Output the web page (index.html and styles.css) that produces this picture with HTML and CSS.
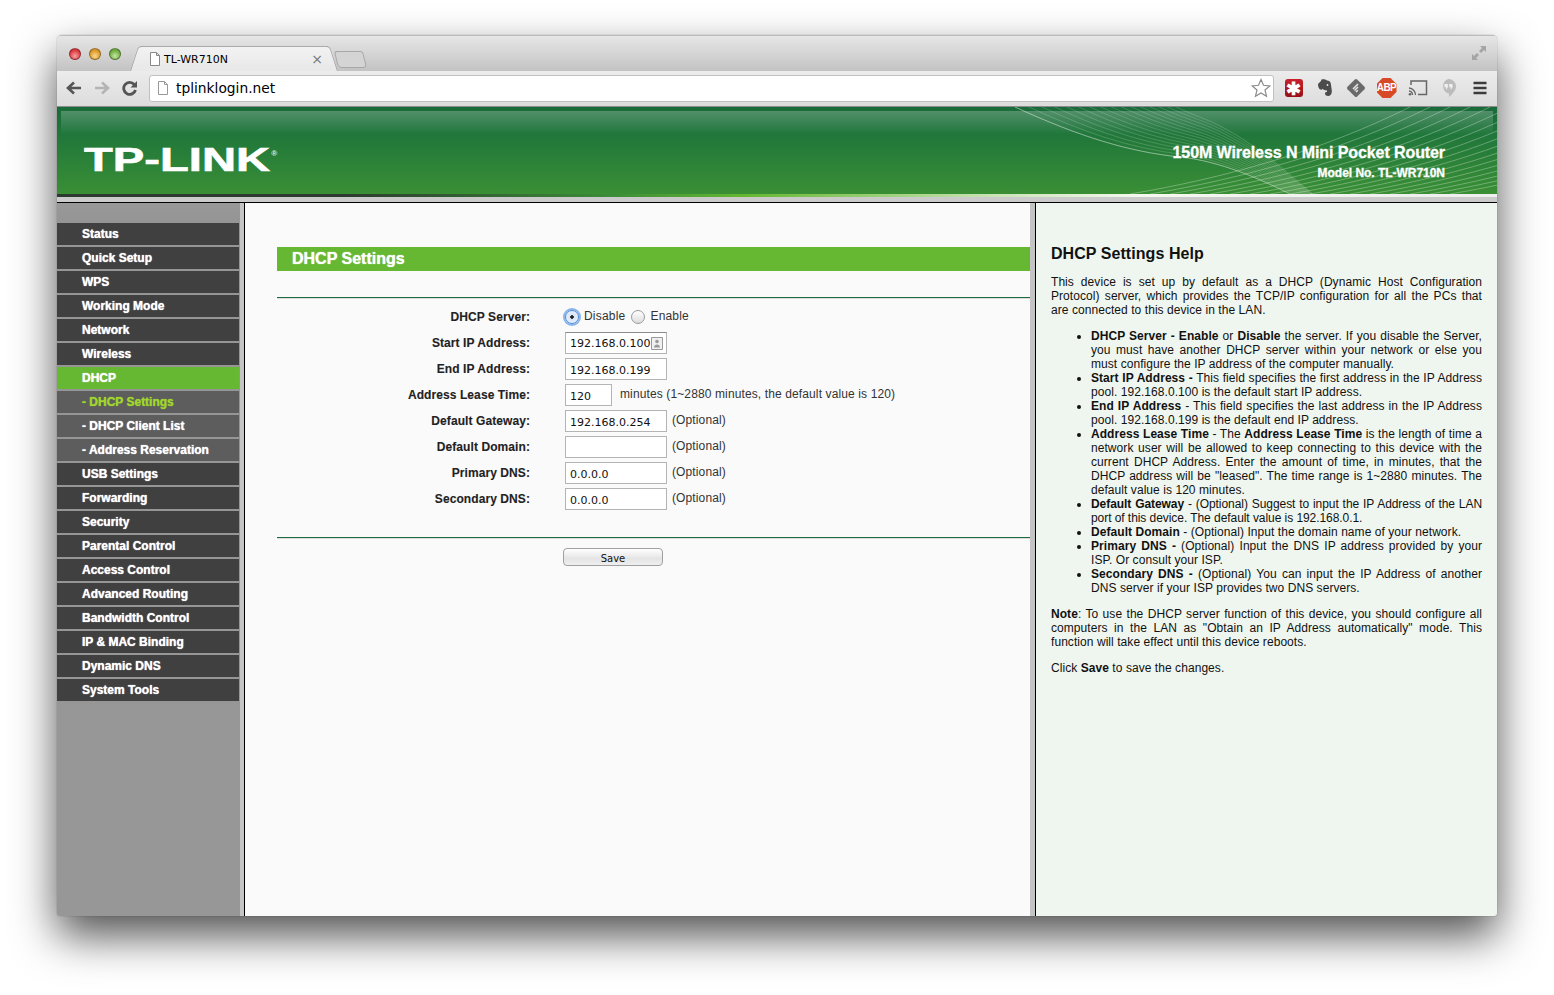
FILE: index.html
```html
<!DOCTYPE html>
<html lang="en">
<head>
    <meta charset="UTF-8">
    <title>TL-WR710N</title>
    <link rel="stylesheet" href="styles.css">
</head>
<body>
<div class="window">
    <div class="tabbar">
        <div class="lights">
            <span class="light red"></span>
            <span class="light yellow"></span>
            <span class="light green"></span>
        </div>
        <div class="tab">
            <svg class="page-icon" width="12" height="14" viewBox="0 0 12 14"><path d="M1.500.5h6l3 3v10h-9z M7.500.5v3h3" fill="#fff" stroke="#888"/></svg>
            <span class="tab-title">TL-WR710N</span>
            <span class="tab-close">×</span>
        </div>
        <div class="newtab"></div>
        <svg class="fullscreen" width="16" height="16" viewBox="0 0 16 16"><path d="M9 1h6v6l-2-2-3 3-2-2 3-3z M1 9v6h6l-2-2 3-3-2-2-3 3z" fill="#a5a5a5"/></svg>
    </div>
    <div class="toolbar">
        <svg class="nav" width="18" height="16" viewBox="0 0 18 16"><path d="M16 8H4 M9 2.500 3 8l6 5.500" fill="none" stroke="#555" stroke-width="2.600"/></svg>
        <svg class="nav" width="18" height="16" viewBox="0 0 18 16"><path d="M2 8h12 M9 2.500 15 8l-6 5.500" fill="none" stroke="#b4b4b4" stroke-width="2.600"/></svg>
        <svg class="nav" width="18" height="16" viewBox="0 0 18 16"><path d="M14.500 10a6 6 0 1 1-1.200-5.500" fill="none" stroke="#555" stroke-width="2.800"/><path d="M16 1v6.500H9.500z" fill="#555"/></svg>
        <div class="omnibox">
            <svg class="page-icon" width="12" height="14" viewBox="0 0 12 14"><path d="M1.500.5h6l3 3v10h-9z M7.500.5v3h3" fill="#fff" stroke="#999"/></svg>
            <span class="url">tplinklogin.net</span>
            <svg class="star" width="20" height="20" viewBox="0 0 20 20"><path d="M10 1.500l2.500 5.800 6.300.6-4.800 4.100 1.500 6.200L10 14.900l-5.500 3.300L6 12 1.200 7.900l6.300-.6z" fill="#fff" stroke="#8a8a8a" stroke-width="1.200"/></svg>
        </div>
        <div class="extensions">
            <span class="ext lastpass">✱</span>
            <svg width="16" height="18" viewBox="0 0 16 18"><path d="M1 5l3-3 .5-1.500C6 0 9 .5 10 1.500c2 0 3.500 1 3.800 3l1 7c.2 3-1 5.500-3.800 5.500-2 0-3-1-3-2.500 0-1 1-1.800 2-1.300l-.2-2c-2 0-3.500-.3-4-1.500-.8 1-1.500 1.300-3 .5C1.500 9.500 1 7 1 5z" fill="#4c4c4c"/><circle cx="10.500" cy="6" r=".9" fill="#e6e6e6"/></svg>
            <svg width="20" height="20" viewBox="0 0 20 20"><path d="M8.800 1.500a1.700 1.700 0 0 1 2.400 0l7.300 7.300a1.700 1.700 0 0 1 0 2.400l-7.300 7.300a1.700 1.700 0 0 1-2.400 0l-7.300-7.300a1.700 1.700 0 0 1 0-2.400z" fill="#6a6a6a"/><path d="M7 11l5-5 M8.500 12.500l3.500-3.500 M10 14l1.800-1.800" stroke="#e8e8e8" stroke-width="1.500"/></svg>
            <span class="ext abp">ABP</span>
            <svg width="20" height="18" viewBox="0 0 20 18"><path d="M3 6V2h15.500v13.500H10" fill="none" stroke="#666" stroke-width="1.500"/><path d="M1 9a7 7 0 0 1 6.500 7 M1 12a4 4 0 0 1 3.500 4" fill="none" stroke="#666" stroke-width="1.300"/><circle cx="2" cy="15.300" r="1.300" fill="#666"/></svg>
            <svg width="17" height="20" viewBox="0 0 17 20"><path d="M8.500 1a7.500 7.500 0 0 1 7.500 7.500c0 3.500-3 7-7 10.500v-3.500A7.500 7.500 0 0 1 8.500 1z" fill="#bcbcbc"/><path d="M4.500 6h3.300v3.300L6 12V9.300H4.500z M9.200 6h3.300v3.300L10.700 12V9.300H9.200z" fill="#f0f0f0"/></svg>
            <svg width="14" height="14" viewBox="0 0 14 14"><path d="M.5 2h13 M.5 7h13 M.5 12h13" stroke="#3c3c3c" stroke-width="2.500"/></svg>
        </div>
    </div>

    <div class="banner">
        <div class="gloss"></div>
        <svg class="waves" width="500" height="87" viewBox="997 0 500 87" fill="none" stroke="#fff">
            <defs>
                <path id="fan" d="M1015 0C1080 30 1130 45 1180 50 1220 54 1260 72 1290 87 1310 96 1325 104 1340 112"/>
                <path id="rise" d="M1230 87C1320 72 1420 45 1510 0"/>
            </defs>
            <g stroke-opacity=".17">
                <use href="#fan"/>
                <use href="#fan" transform="rotate(1 1340 112)"/>
                <use href="#fan" transform="rotate(2 1340 112)"/>
                <use href="#fan" transform="rotate(3 1340 112)"/>
                <use href="#fan" transform="rotate(4 1340 112)"/>
                <use href="#fan" transform="rotate(5 1340 112)"/>
                <use href="#fan" transform="rotate(6 1340 112)"/>
                <use href="#fan" transform="rotate(7 1340 112)"/>
                <use href="#fan" transform="rotate(8 1340 112)"/>
                <use href="#fan" transform="rotate(9 1340 112)"/>
                <use href="#fan" transform="rotate(10 1340 112)"/>
                <use href="#fan" transform="rotate(11 1340 112)"/>
                <use href="#fan" transform="rotate(12 1340 112)"/>
                <use href="#fan" transform="rotate(13 1340 112)"/>
                <use href="#fan" transform="rotate(14 1340 112)"/>
                <use href="#fan" transform="rotate(15 1340 112)"/>
            </g>
            <use href="#fan" stroke-opacity=".35"/>
            <g stroke-opacity=".3">
                <use href="#rise" transform="translate(-20 0)"/>
                <use href="#rise" transform="translate(-40 0)"/>
                <use href="#rise" transform="translate(-60 0)"/>
                <use href="#rise" transform="translate(-80 0)"/>
                <use href="#rise" transform="translate(-100 0)"/>
                <use href="#rise"/>
                <use href="#rise" transform="translate(20 0)"/>
                <use href="#rise" transform="translate(40 0)"/>
                <use href="#rise" transform="translate(60 0)"/>
                <use href="#rise" transform="translate(80 0)"/>
                <use href="#rise" transform="translate(100 0)"/>
                <use href="#rise" transform="translate(120 0)"/>
                <use href="#rise" transform="translate(140 0)"/>
                <use href="#rise" transform="translate(160 0)"/>
                <use href="#rise" transform="translate(180 0)"/>
                <use href="#rise" transform="translate(200 0)"/>
                <use href="#rise" transform="translate(220 0)"/>
            </g>
        </svg>
        <div class="logo"><span class="logo-text">TP-LINK</span><span class="logo-reg">®</span></div>
        <div class="product">
            <div class="product-name">150M Wireless N Mini Pocket Router</div>
            <div class="product-model">Model No. TL-WR710N</div>
        </div>
    </div>
    <div class="banner-foot"></div>

    <div class="columns">
        <nav class="sidebar">
            <a class="menu-item">Status</a>
            <a class="menu-item">Quick Setup</a>
            <a class="menu-item">WPS</a>
            <a class="menu-item">Working Mode</a>
            <a class="menu-item">Network</a>
            <a class="menu-item">Wireless</a>
            <a class="menu-item active">DHCP</a>
            <a class="menu-item sub current">- DHCP Settings</a>
            <a class="menu-item sub">- DHCP Client List</a>
            <a class="menu-item sub">- Address Reservation</a>
            <a class="menu-item">USB Settings</a>
            <a class="menu-item">Forwarding</a>
            <a class="menu-item">Security</a>
            <a class="menu-item">Parental Control</a>
            <a class="menu-item">Access Control</a>
            <a class="menu-item">Advanced Routing</a>
            <a class="menu-item">Bandwidth Control</a>
            <a class="menu-item">IP &amp; MAC Binding</a>
            <a class="menu-item">Dynamic DNS</a>
            <a class="menu-item">System Tools</a>
        </nav>

        <main class="content">
            <h1 class="section-title">DHCP Settings</h1>
            <hr class="rule first">
            <div class="form">
                <div class="label">DHCP Server:</div>
                <div class="field">
                    <span class="radio checked"></span><span class="radio-label">Disable</span>
                    <span class="radio"></span><span class="radio-label">Enable</span>
                </div>
                <div class="label">Start IP Address:</div>
                <div class="field"><span class="input with-key">192.168.0.100<svg class="key" width="12" height="13" viewBox="0 0 12 13"><path d="M.5.5h11v12H.5z" fill="#f0f0f0" stroke="#999"/><circle cx="6" cy="4.500" r="1.800" fill="#999"/><path d="M3 10.500c0-4 6-4 6 0z" fill="#999"/></svg></span></div>
                <div class="label">End IP Address:</div>
                <div class="field"><span class="input">192.168.0.199</span></div>
                <div class="label">Address Lease Time:</div>
                <div class="field"><span class="input short">120</span><span class="note wide">minutes (1~2880 minutes, the default value is 120)</span></div>
                <div class="label">Default Gateway:</div>
                <div class="field"><span class="input">192.168.0.254</span><span class="note">(Optional)</span></div>
                <div class="label">Default Domain:</div>
                <div class="field"><span class="input"></span><span class="note">(Optional)</span></div>
                <div class="label">Primary DNS:</div>
                <div class="field"><span class="input">0.0.0.0</span><span class="note">(Optional)</span></div>
                <div class="label">Secondary DNS:</div>
                <div class="field"><span class="input">0.0.0.0</span><span class="note">(Optional)</span></div>
            </div>
            <hr class="rule second">
            <div class="actions"><button class="save">Save</button></div>
        </main>

        <aside class="help">
            <h2>DHCP Settings Help</h2>
            <p>This device is set up by default as a DHCP (Dynamic Host Configuration Protocol) server, which provides the TCP/IP configuration for all the PCs that are connected to this device in the LAN.</p>
            <ul>
                <li><b>DHCP Server - Enable</b> or <b>Disable</b> the server. If you disable the Server, you must have another DHCP server within your network or else you must configure the IP address of the computer manually.</li>
                <li><b>Start IP Address -</b> This field specifies the first address in the IP Address pool. 192.168.0.100 is the default start IP address.</li>
                <li><b>End IP Address</b> - This field specifies the last address in the IP Address pool. 192.168.0.199 is the default end IP address.</li>
                <li><b>Address Lease Time</b> - The <b>Address Lease Time</b> is the length of time a network user will be allowed to keep connecting to this device with the current DHCP Address. Enter the amount of time, in minutes, that the DHCP address will be "leased". The time range is 1~2880 minutes. The default value is 120 minutes.</li>
                <li class="tight"><b>Default Gateway</b> - (Optional) Suggest to input the IP Address of the LAN port of this device. The default value is 192.168.0.1.</li>
                <li><b>Default Domain</b> - (Optional) Input the domain name of your network.</li>
                <li><b>Primary DNS -</b> (Optional) Input the DNS IP address provided by your ISP. Or consult your ISP.</li>
                <li><b>Secondary DNS -</b> (Optional) You can input the IP Address of another DNS server if your ISP provides two DNS servers.</li>
            </ul>
            <p><b>Note</b>: To use the DHCP server function of this device, you should configure all computers in the LAN as "Obtain an IP Address automatically" mode. This function will take effect until this device reboots.</p>
            <p>Click <b>Save</b> to save the changes.</p>
        </aside>
    </div>
</div>
</body>
</html>
```

FILE: styles.css
```css
html, body {
    margin: 0;
    height: 995px;
    overflow: hidden;
    background: #fff;
}
body {
    font-family: "Liberation Sans", Arial, sans-serif;
    font-size: 12px;
    color: #000;
    padding: 35px 57px 0;
    box-sizing: border-box;
}
.window {
    height: 881px;
    display: flex;
    flex-direction: column;
    border-radius: 5px 5px 3px 3px;
    overflow: hidden;
    box-shadow: 0 0 1px rgba(0,0,0,.6);
}
body::before {
    content: "";
    position: absolute;
    left: 57px;
    top: 35px;
    width: 1440px;
    height: 881px;
    border-radius: 5px;
    box-shadow: 0 20px 44px rgba(0,0,0,.68);
}
.window > * {
    position: relative;
}

/* browser chrome */
.tabbar {
    height: 36px;
    flex: none;
    display: flex;
    align-items: flex-end;
    background: linear-gradient(#e6e6e6, #c3c3c3);
    border-top: 1px solid #bbb;
    box-sizing: border-box;
}
.lights {
    display: flex;
    gap: 8px;
    align-self: flex-start;
    margin: 12px 0 0 12px;
}
.light {
    width: 12px;
    height: 12px;
    border-radius: 50%;
    box-sizing: border-box;
    border: 1px solid rgba(0,0,0,.35);
}
.red { background: radial-gradient(circle at 50% 70%, #f7a0a0, #d9333a 70%); }
.yellow { background: radial-gradient(circle at 50% 70%, #fbd98c, #d99322 70%); }
.green { background: radial-gradient(circle at 50% 70%, #c5e8a0, #6aa83c 70%); }
.tab {
    position: relative;
    width: 188px;
    height: 25px;
    margin-left: 19px;
    padding-left: 9px;
    box-sizing: border-box;
    display: flex;
    align-items: center;
    background: linear-gradient(#f2f2f2, #e8e8e8);
    border-top: 1px solid #aaa;
    font-family: "DejaVu Sans", sans-serif;
    font-size: 11px;
}
.tab::before,
.tab::after {
    content: "";
    position: absolute;
    top: -1px;
    bottom: 0;
    width: 12px;
    background: linear-gradient(#f2f2f2, #e8e8e8);
    border-top: 1px solid #aaa;
}
.tab::before {
    left: -6px;
    transform: skewX(-18deg);
    border-left: 1px solid #aaa;
    border-radius: 4px 0 0 0;
}
.tab::after {
    right: -6px;
    transform: skewX(18deg);
    border-right: 1px solid #aaa;
    border-radius: 0 4px 0 0;
}
.page-icon {
    position: relative;
    z-index: 1;
}
.tab-title {
    margin-left: 3px;
    flex: 1;
    position: relative;
    z-index: 1;
}
.tab-close {
    margin-right: 5px;
    font-size: 14px;
    color: #777;
    position: relative;
    z-index: 1;
}
.newtab {
    width: 27px;
    height: 15px;
    margin: 0 0 3px 8px;
    border: 1px solid #a8a8a8;
    border-radius: 3px 3px 4px 4px;
    background: #d4d4d4;
    transform: skewX(14deg);
}
.fullscreen {
    margin-left: auto;
    margin-right: 10px;
    align-self: flex-start;
    margin-top: 9px;
}
.toolbar {
    height: 36px;
    flex: none;
    display: flex;
    align-items: center;
    padding: 0 0 1px 8px;
    box-sizing: border-box;
    gap: 10px;
    background: linear-gradient(#ececec, #dcdcdc);
    border-bottom: 1px solid #8c8c8c;
}
.omnibox {
    width: 1125px;
    height: 27px;
    box-sizing: border-box;
    display: flex;
    align-items: center;
    padding: 0 2px 0 7px;
    background: #fff;
    border: 1px solid #c0c0c0;
    border-radius: 3px;
}
.url {
    flex: 1;
    margin-left: 7px;
    font-family: "DejaVu Sans", sans-serif;
    font-size: 13.800px;
}
.extensions {
    display: grid;
    grid-template-columns: repeat(7, 31px);
    justify-items: center;
    align-items: center;
    margin-left: -6px;
}
.ext {
    display: block;
    text-align: center;
    color: #fff;
    font-weight: bold;
}
.lastpass {
    width: 18px;
    height: 18px;
    background: linear-gradient(#c8202c, #961019);
    border-radius: 3px;
    font-size: 18px;
    line-height: 20px;
}
.abp {
    width: 20px;
    height: 20px;
    background: #d84a26;
    clip-path: polygon(30% 0, 70% 0, 100% 30%, 100% 70%, 70% 100%, 30% 100%, 0 70%, 0 30%);
    font-size: 10px;
    line-height: 20px;
    letter-spacing: -.6px;
}

/* router banner */
.banner {
    height: 87px;
    flex: none;
    overflow: hidden;
    display: flex;
    justify-content: space-between;
    background: linear-gradient(#1a6b3a, #1f763a 30%, #3a8f35);
}
.gloss {
    position: absolute;
    left: 4px;
    right: 4px;
    top: 4px;
    height: 24px;
    background: linear-gradient(rgba(255,255,255,.24), rgba(255,255,255,0));
}
.waves {
    position: absolute;
    right: 0;
    top: 0;
}
.logo {
    position: relative;
    margin: 41px 0 0 27px;
    color: #fff;
    font-weight: bold;
    line-height: 24px;
    display: flex;
}
.logo-text {
    font-size: 33px;
    transform: scaleX(1.43);
    transform-origin: left;
    -webkit-text-stroke: .6px #fff;
}
.logo-reg {
    font-size: 8px;
    line-height: 12px;
    margin-left: 57px;
    opacity: .9;
}
.product {
    position: relative;
    margin: 37px 52px 0 0;
    text-align: right;
    color: #fff;
    font-weight: bold;
    -webkit-text-stroke: .3px #fff;
}
.product-name {
    font-size: 16px;
    line-height: 18px;
    letter-spacing: -.09px;
}
.product-model {
    font-size: 12px;
    line-height: 14px;
    margin-top: 4px;
    letter-spacing: -.03px;
}
.banner-foot {
    height: 9px;
    flex: none;
    box-sizing: border-box;
    background:
        linear-gradient(#0000 0, #0000 3px, #cbcbcb 3px, #cbcbcb 8px, #000 8px),
        linear-gradient(90deg, #2d3a30, #2d3a30 20%, #3a8a38 38%, #66b832 48%, #c9e3b5 65%, #f4f8ee 75%, #eee);
}

/* three columns */
.columns {
    flex: 1;
    display: flex;
    min-height: 0;
}
.sidebar {
    width: 188px;
    flex: none;
    box-sizing: border-box;
    padding: 20px 5px 0 0;
    display: flex;
    flex-direction: column;
    gap: 2px;
    background: linear-gradient(#999, #959595 15px, #979797) 0 0 / 183px 100% no-repeat, #c4c4c4;
    border-right: 1px solid #000;
}
.menu-item {
    height: 22px;
    line-height: 22px;
    padding-left: 25px;
    background: #404040;
    color: #fff;
    font-weight: bold;
    font-size: 12px;
    text-shadow: 0 0 1px #fff;
}
.menu-item.active { background: #66b832; }
.menu-item.sub { background: #5d5d5d; }
.menu-item.current {
    color: #9fd62f;
    text-shadow: 0 0 1px #9fd62f;
}
.content {
    width: 785px;
    flex: none;
    box-sizing: border-box;
    padding: 44px 0 0 32px;
    background: #fafafa;
}
.section-title {
    margin: 0;
    height: 24px;
    line-height: 24px;
    padding-left: 15px;
    background: #66b832;
    color: #fff;
    font-size: 16px;
    text-shadow: 0 0 1px #fff;
}
.rule {
    margin: 0;
    border: 0;
    height: 1px;
    background: #1d6b3c;
    box-shadow: 0 1px 0 #ddd;
}
.rule.first { margin-top: 26px; }
.form {
    display: grid;
    grid-template-columns: 253px 1fr;
    column-gap: 35px;
    grid-auto-rows: 26px;
    padding-top: 6px;
    height: 239px;
    box-sizing: border-box;
    align-items: center;
}
.label {
    text-align: right;
    font-weight: bold;
    color: #222;
    letter-spacing: .08px;
    -webkit-text-stroke: .1px #222;
}
.field {
    display: flex;
    align-items: center;
    color: #333;
    letter-spacing: .12px;
}
.input {
    width: 102px;
    height: 22px;
    box-sizing: border-box;
    padding: 3px 4px 0;
    display: flex;
    justify-content: space-between;
    align-items: center;
    background: #fff;
    border: 1px solid #b4b4b4;
    font-family: "DejaVu Sans", sans-serif;
    font-size: 11px;
    letter-spacing: 0;
    color: #111;
}
.input.short { width: 47px; }
.with-key {
    padding: 0 3px 0 4px;
    border-top-color: #8a8a8a;
}
.key { flex: none; }
.note {
    margin: -2px 0 0 5px;
}
.note.wide { margin-left: 8px; }
.radio {
    width: 14px;
    height: 14px;
    margin-left: 1px;
    box-sizing: border-box;
    border-radius: 50%;
    background: linear-gradient(#fff, #ddd);
    border: 1px solid #9a9a9a;
}
.radio.checked {
    margin-left: 0;
    background: radial-gradient(circle, #222 0 1.500px, #d8e6f8 2px, #eef4fc);
    border-color: #4a8ad8;
    box-shadow: 0 0 0 2px #8ab4ea;
}
.radio-label {
    margin: -3px 5px 0 5px;
    letter-spacing: .2px;
}
.radio-label:first-of-type {
    margin-right: 4px;
}
.actions {
    padding: 10px 0 0 286px;
}
.save {
    display: block;
    width: 100px;
    height: 18px;
    padding: 2px 0 0;
    border: 1px solid #a0a0a0;
    border-radius: 4px;
    background: linear-gradient(#fff, #e4e4e4 60%, #efefef);
    font-family: "DejaVu Sans", sans-serif;
    font-size: 10px;
    color: #111;
}
.help {
    flex: 1;
    margin-left: 5px;
    box-sizing: border-box;
    padding: 41px 15px 0 15px;
    background: #eff6ef;
    border-left: 1px solid #000;
    box-shadow: -5px 0 0 #c4c4c4;
    line-height: 14px;
    letter-spacing: .06px;
    color: #111;
}
.help h2 {
    margin: 0 0 11px;
    font-size: 16px;
    line-height: 20px;
    color: #111;
}
.help p {
    margin: 0 0 12px;
    text-align: justify;
}
.help ul {
    margin: 0 0 12px;
    padding-left: 40px;
}
.help li {
    text-align: justify;
}
.help li.tight {
    letter-spacing: -.06px;
}
```
